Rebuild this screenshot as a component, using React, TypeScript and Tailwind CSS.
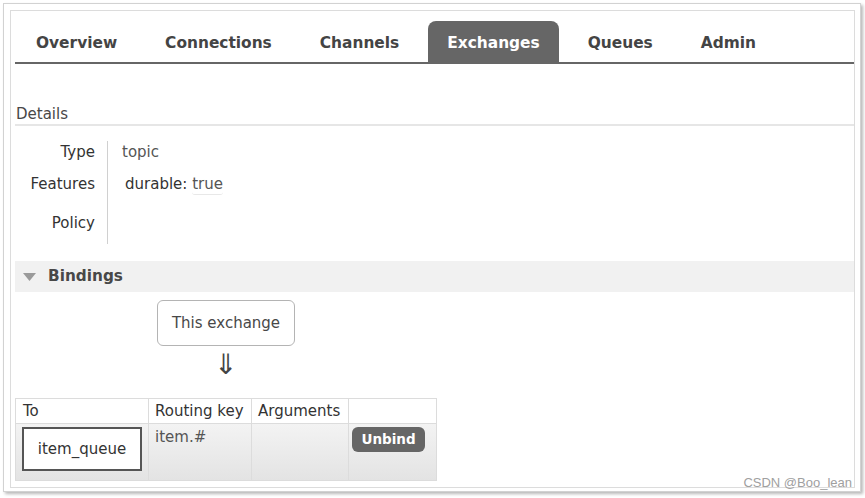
import React from "react";

const tabs = ["Overview", "Connections", "Channels", "Exchanges", "Queues", "Admin"];

export default function App() {
  return (
    <div className="w-[865px] h-[498px] bg-white overflow-hidden [font-family:'DejaVu_Sans',Verdana,sans-serif]">
      {/* outer frame */}
      <div className="relative ml-[3px] mt-[3px] w-[858px] h-[489px] border border-[#d2d2d2] bg-white shadow-[2px_2px_3px_rgba(0,0,0,0.28)] pt-[6px] pl-[6px] pr-[5px] pb-[3px]">
        {/* inner box */}
        <div className="h-full border border-[#dcdcdc] pl-[4px] pt-[10px]">
          {/* tabs */}
          <div className="flex gap-[10px] pl-[2px] border-b-2 border-[#666]">
            {tabs.map((t) => (
              <div
                key={t}
                className={`h-[41px] px-[19px] pt-[4px] flex items-center rounded-t-[8px] text-[15.4px] font-bold ${
                  t === "Exchanges" ? "bg-[#666] text-white" : "text-[#444]"
                }`}
              >
                {t}
              </div>
            ))}
          </div>

          {/* details */}
          <div className="mt-[40px] h-[22px] leading-[20px] text-[15px] text-[#484848] border-b-2 border-[#e6e6e6] pl-[1px]">
            Details
          </div>

          <div className="mt-[15px] flex text-[15px]">
            <div className="w-[80px] flex flex-col text-right text-[#333]">
              <div className="h-[22px] leading-[22px]">Type</div>
              <div className="h-[42px] flex items-center justify-end">Features</div>
              <div className="h-[36px] flex items-center justify-end">Policy</div>
            </div>
            <div className="ml-[12px] border-l-[1.5px] border-[#d0d0d0] pl-[14px] pb-[3px] flex flex-col text-[#555]">
              <div className="h-[22px] leading-[22px]">topic</div>
              <div className="h-[42px] flex items-center pl-[3px] text-[#333]">
                durable:&nbsp;
                <span className="text-[#555] border-b border-[#e8e8e8] rounded-[3px] leading-[20px]">true</span>
              </div>
              <div className="h-[36px]" />
            </div>
          </div>

          {/* bindings */}
          <div className="mt-[17px] h-[31px] bg-[#f1f1f1] flex items-center">
            <svg width="13" height="8" viewBox="0 0 13 8" className="ml-[8px]">
              <polygon points="0,0 13,0 6.5,8" fill="#9a9a9a" />
            </svg>
            <span className="ml-[12px] text-[15.3px] font-bold text-[#484848]">Bindings</span>
          </div>

          <div className="ml-[142px] w-[138px]">
            <div className="mt-[8px] h-[46px] border-[1.5px] border-[#b4b4b4] rounded-[6px] flex items-center justify-center text-[15px] text-[#484848]">
              This exchange
            </div>
            <div className="h-[52px] pb-[14px] flex items-center justify-center text-[28px] leading-none text-[#444]">
              ⇓
            </div>
          </div>

          {/* table */}
          <table className="border-collapse text-[15px] text-[#333]">
            <thead>
              <tr className="h-[25px] bg-white">
                <th className="w-[133px] border border-[#dcdcdc] font-normal text-left pl-[7px]">To</th>
                <th className="w-[103px] border border-[#dcdcdc] font-normal text-left pl-[6px]">Routing key</th>
                <th className="w-[97px] border border-[#dcdcdc] font-normal text-left pl-[6px]">Arguments</th>
                <th className="w-[88px] border border-[#dcdcdc]" />
              </tr>
            </thead>
            <tbody>
              <tr className="h-[57px] bg-gradient-to-b from-[#f3f3f3] to-[#e3e3e3]">
                <td className="border border-[#dcdcdc] align-top pt-[3px] pl-[6px]">
                  <div className="w-[120px] h-[44px] border-2 border-[#555] bg-white flex items-center justify-center">
                    item_queue
                  </div>
                </td>
                <td className="border border-[#dcdcdc] align-top pt-[2px] pl-[6px] text-[#555]">item.#</td>
                <td className="border border-[#dcdcdc]" />
                <td className="border border-[#dcdcdc] align-top pt-[3px] pl-[3px]">
                  <div className="w-[73px] h-[25px] rounded-[6px] bg-[#666] text-white text-[13.5px] font-bold flex items-center justify-center">
                    Unbind
                  </div>
                </td>
              </tr>
            </tbody>
          </table>
        </div>

        <div className="absolute right-[8px] bottom-[0px] text-[13px] leading-[16px] text-[#a0a0a0] [font-family:'Liberation_Sans',Arial,sans-serif]">
          CSDN @Boo_lean
        </div>
      </div>
    </div>
  );
}
